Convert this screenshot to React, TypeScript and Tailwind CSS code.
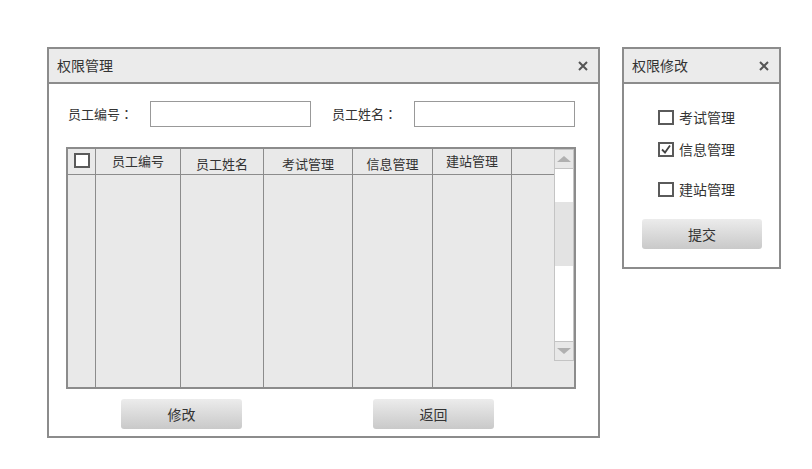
import React from "react";

const font = { fontFamily: '"Noto Sans CJK SC", "Noto Sans", sans-serif' };
const jp = { fontFamily: '"Noto Sans CJK JP", sans-serif' };

const columns = [
  { label: "", width: "w-[28px]", offset: "pt-0" },
  { label: "员工编号", width: "w-[85px]", offset: "pt-[2px]" },
  { label: "员工姓名", width: "w-[83px]", offset: "pt-[5px]" },
  { label: "考试管理", width: "w-[89px]", offset: "pt-[5px]" },
  { label: "信息管理", width: "w-[80px]", offset: "pt-[5px]" },
  { label: "建站管理", width: "w-[79px]", offset: "pt-[2px]" },
];

function CloseIcon() {
  return (
    <svg width="10" height="10" viewBox="0 0 10 10">
      <path d="M1 1 L9 9 M9 1 L1 9" stroke="#555" strokeWidth="2" />
    </svg>
  );
}

function Checkbox({ checked = false }: { checked?: boolean }) {
  return (
    <div className="flex h-[15px] w-[16px] shrink-0 items-center justify-center border-2 border-[#5a5a5a] bg-white">
      {checked && (
        <svg width="10" height="9" viewBox="0 0 10 9">
          <path d="M1 4.5 L4 7.5 L9 0.5" fill="none" stroke="#444" strokeWidth="1.8" />
        </svg>
      )}
    </div>
  );
}

function Button({ label, width }: { label: string; width: string }) {
  return (
    <button
      className={`${width} h-[30px] shrink-0 rounded-[3px] bg-gradient-to-b from-[#ececec] to-[#c9c9c9] text-[14px] text-[#333]`}
    >
      {label}
    </button>
  );
}

function Header({ title }: { title: string }) {
  return (
    <div className="flex h-[35px] items-center justify-between border-b-2 border-[#8c8c8c] bg-[#ebebeb] pl-[8px] pr-[10px]">
      <span className="text-[14px] text-[#333]">{title}</span>
      <CloseIcon />
    </div>
  );
}

function Scrollbar() {
  return (
    <div className="flex w-[20px] shrink-0 flex-col">
      <div className="flex h-[212px] flex-col border border-[#c4c4c4] bg-white">
        <div className="flex h-[19px] items-center justify-center border-b border-[#c4c4c4] bg-[#e8e8e8]">
          <div className="h-0 w-0 border-x-[7px] border-b-[6px] border-x-transparent border-b-[#b0b0b0]" />
        </div>
        <div className="h-[33px]" />
        <div className="h-[64px] bg-[#e3e3e3]" />
        <div className="flex-1" />
        <div className="flex h-[19px] items-center justify-center border-t border-[#c4c4c4] bg-[#e8e8e8]">
          <div className="h-0 w-0 border-x-[7px] border-t-[6px] border-x-transparent border-t-[#b0b0b0]" />
        </div>
      </div>
    </div>
  );
}

function Table() {
  return (
    <div className="ml-[17px] mt-[20px] flex h-[242px] w-[510px] border-2 border-[#8c8c8c] bg-[#e9e9e9]">
      {columns.map((c, i) => (
        <div key={i} className={`${c.width} flex shrink-0 flex-col border-r border-[#8c8c8c]`}>
          <div className={`flex h-[26px] justify-center border-b border-[#8c8c8c] text-[13px] text-[#333] ${c.offset}`}>
            {i === 0 ? (
              <div className="pt-[4px]">
                <Checkbox />
              </div>
            ) : (
              <span className="leading-[20px]">{c.label}</span>
            )}
          </div>
        </div>
      ))}
      <div className="flex w-[42px] shrink-0 flex-col">
        <div className="h-[26px] border-b border-[#8c8c8c]" />
      </div>
      <Scrollbar />
    </div>
  );
}

function Label({ text }: { text: string }) {
  return (
    <span className="w-[82px] shrink-0">
      {text}
      <span style={jp}>：</span>
    </span>
  );
}

export default function App() {
  return (
    <div className="flex h-[469px] w-[812px] gap-[22px] bg-white pl-[47px] pt-[47px]" style={font}>
      <div className="flex h-[391px] w-[553px] shrink-0 flex-col border-2 border-[#8c8c8c] bg-white">
        <Header title="权限管理" />
        <div className="mt-[17px] flex items-center pl-[19px] text-[13px] text-[#333]">
          <Label text="员工编号" />
          <div className="h-[26px] w-[161px] shrink-0 border border-[#999]" />
          <div className="w-[21px] shrink-0" />
          <Label text="员工姓名" />
          <div className="h-[26px] w-[161px] shrink-0 border border-[#999]" />
        </div>
        <Table />
        <div className="mt-[10px] flex pl-[72px]">
          <Button label="修改" width="w-[121px]" />
          <div className="w-[131px] shrink-0" />
          <Button label="返回" width="w-[121px]" />
        </div>
      </div>
      <div className="flex h-[222px] w-[159px] shrink-0 flex-col border-2 border-[#8c8c8c] bg-white">
        <Header title="权限修改" />
        <div className="flex flex-col pl-[34px] text-[14px] text-[#333]">
          <div className="mt-[25px] flex h-[16px] items-center gap-[5px]">
            <Checkbox />
            <span>考试管理</span>
          </div>
          <div className="mt-[16px] flex h-[16px] items-center gap-[5px]">
            <Checkbox checked />
            <span>信息管理</span>
          </div>
          <div className="mt-[24px] flex h-[16px] items-center gap-[5px]">
            <Checkbox />
            <span>建站管理</span>
          </div>
        </div>
        <div className="mt-[22px] pl-[18px]">
          <Button label="提交" width="w-[120px]" />
        </div>
      </div>
    </div>
  );
}
